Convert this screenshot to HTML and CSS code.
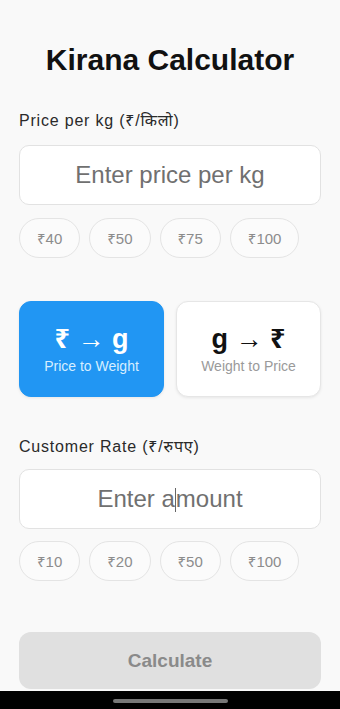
FILE: index.html
```html
<html lang="en">
<head>
    <meta charset="UTF-8">
    <meta name="viewport" content="width=device-width, initial-scale=1.0">
    <title>Kirana Calculator</title>
    <link rel="stylesheet" href="styles.css">
</head>
<body>
    <div class="screen">
        <h1 class="title">Kirana Calculator</h1>

        <div class="label first-label">Price per kg (₹/किलो)</div>
        <div class="field"><span class="placeholder">Enter price per kg</span></div>
        <div class="chips">
            <div class="chip">₹40</div>
            <div class="chip">₹50</div>
            <div class="chip">₹75</div>
            <div class="chip">₹100</div>
        </div>

        <div class="modes">
            <div class="mode active">
                <div class="mode-icon">₹ → g</div>
                <div class="mode-text">Price to Weight</div>
            </div>
            <div class="mode">
                <div class="mode-icon">g → ₹</div>
                <div class="mode-text">Weight to Price</div>
            </div>
        </div>

        <div class="label second-label">Customer Rate (₹/रुपए)</div>
        <div class="field field-two"><span class="placeholder">Enter a<span class="caret"></span>mount</span></div>
        <div class="chips chips-two">
            <div class="chip">₹10</div>
            <div class="chip">₹20</div>
            <div class="chip">₹50</div>
            <div class="chip">₹100</div>
        </div>

        <button class="calc-btn" type="button">Calculate</button>
    </div>
    <div class="nav-bar"><div class="home-pill"></div></div>
</body>
</html>
```

FILE: styles.css
```css
body { margin: 0; background: #f9f9f9; font-family: "Liberation Sans", Arial, "Noto Sans", "DejaVu Sans", sans-serif; }
.screen { height: 691px; padding: 0 19px; box-sizing: border-box; overflow: hidden; }
.title { margin: 0; padding-top: 40px; line-height: 40px; font-size: 30px; font-weight: bold; text-align: center; color: #111; }
.label { font-size: 16px; line-height: 18px; color: #2a2a2a; letter-spacing: 0.8px; }
.first-label { margin-top: 32px; }
.second-label { margin-top: 41px; }
.field {
    margin-top: 15px;
    height: 60px;
    box-sizing: border-box;
    background: #fff;
    border: 1px solid #e2e2e2;
    border-radius: 10px;
    display: flex;
    align-items: center;
    justify-content: center;
}
.field-two { margin-top: 13px; }
.placeholder { font-size: 24px; line-height: 28px; color: #707070; }
.caret { display: inline-block; width: 1px; height: 24px; background: #666; vertical-align: -5px; }
.chips { display: flex; gap: 9px; margin-top: 13px; }
.chips-two { margin-top: 12px; }
.chip {
    height: 40px;
    box-sizing: border-box;
    padding: 0 17px;
    border: 1px solid #e4e4e4;
    border-radius: 20px;
    background: #fbfbfb;
    display: flex;
    align-items: center;
    font-size: 15px;
    color: #8c8c8c;
}
.modes { display: flex; gap: 12px; margin-top: 43px; }
.mode {
    flex: 1;
    height: 96px;
    box-sizing: border-box;
    background: #fff;
    border: 1px solid #e6e6e6;
    border-radius: 12px;
    box-shadow: 0 1px 3px rgba(0, 0, 0, 0.08);
    display: flex;
    flex-direction: column;
    align-items: center;
    justify-content: center;
}
.mode.active { background: #2196f3; border-color: #2196f3; }
.mode-icon { font-size: 27px; font-weight: bold; color: #111; line-height: 30px; }
.mode-text { font-size: 14px; color: #9a9a9a; margin-top: 4px; }
.mode.active .mode-icon { color: #fff; }
.mode.active .mode-text { color: #d6eeff; }
.calc-btn {
    display: block;
    width: 100%;
    height: 57px;
    margin-top: 51px;
    border: none;
    border-radius: 12px;
    background: #e0e0e0;
    font-family: inherit;
    font-size: 19px;
    font-weight: bold;
    color: #8a8a8a;
}
.nav-bar { height: 18px; background: #000; display: flex; justify-content: center; padding-top: 8px; box-sizing: border-box; }
.home-pill { width: 115px; height: 4px; border-radius: 2px; background: #777; }
```
